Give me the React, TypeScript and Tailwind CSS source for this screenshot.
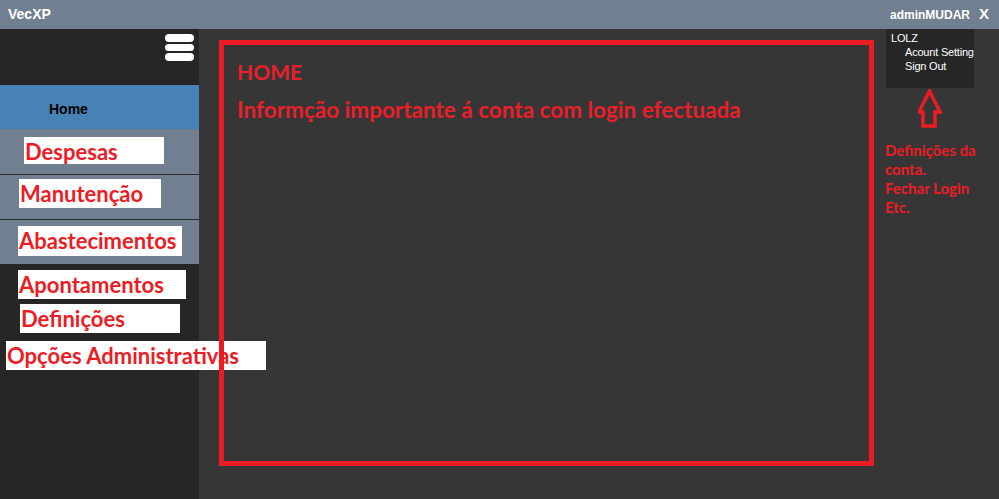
const navRows = [
  { label: 'Despesas', box: 'ml-[24px] mt-[8px] w-[140px] h-[27px]', row: 'h-[46px] border-b border-[#2a2a2a]' },
  { label: 'Manutenção', box: 'ml-[19px] mt-[4px] w-[142px] h-[29px]', row: 'h-[45px] border-b border-[#2a2a2a]' },
  { label: 'Abastecimentos', box: 'ml-[18px] mt-[6px] w-[164px] h-[30px]', row: 'h-[44px]' },
];

const extraItems = [
  { label: 'Apontamentos', box: 'ml-[18px] mt-[6px] w-[168px] h-[29px]' },
  { label: 'Definições', box: 'ml-[20px] mt-[5px] w-[160px] h-[29px]' },
  { label: 'Opções Administrativas', box: 'ml-[6px] mt-[8px] w-[260px] h-[29px]' },
];

function Tag({ label, box }: { label: string; box: string }) {
  return (
    <div className={`${box} bg-white pl-[1px] pt-[4px] text-[22px] leading-none font-bold text-[#ed1c24] whitespace-nowrap font-['Lato',sans-serif]`}>
      {label}
    </div>
  );
}

function UpArrow() {
  return (
    <svg width="25" height="40" viewBox="0 0 25 40" className="ml-[32px] mt-[1px]">
      <path
        d="M11.5 2 L22 23 L17 23 L17 37 L5 37 L5 23 L1 23 Z"
        fill="none"
        stroke="#ed1c24"
        strokeWidth={3.5}
        strokeLinejoin="miter"
      />
    </svg>
  );
}

export default function App() {
  return (
    <div className="w-[999px] h-[499px] bg-[#363636] flex flex-col overflow-hidden font-['Liberation_Sans',Arial,sans-serif]">
      <div className="h-[29px] bg-[#708090] flex items-center justify-between text-white">
        <span className="pl-[8px] text-[14px] font-bold">VecXP</span>
        <div className="flex items-center pr-[10px]">
          <span className="text-[12px] font-bold">adminMUDAR</span>
          <span className="ml-[9px] text-[15px] font-bold">X</span>
        </div>
      </div>

      <div className="flex-1 flex">
        <aside className="w-[199px] bg-[#262626] flex flex-col">
          <div className="h-[56px] flex justify-end pr-[5px] pt-[5px]">
            <div className="flex flex-col gap-[2px]">
              <span className="w-[29px] h-[8px] rounded-full bg-white" />
              <span className="w-[29px] h-[7px] rounded-full bg-white" />
              <span className="w-[29px] h-[8px] rounded-full bg-white" />
            </div>
          </div>
          <div className="h-[44px] bg-[#4682b4] flex items-center pl-[49px] pt-[4px] text-[14px] font-bold text-black">
            Home
          </div>
          {navRows.map(item => (
            <div key={item.label} className={`${item.row} bg-[#708090]`}>
              <Tag label={item.label} box={item.box} />
            </div>
          ))}
          {extraItems.map(item => (
            <Tag key={item.label} label={item.label} box={item.box} />
          ))}
        </aside>

        <main className="flex-1 flex">
          <div className="relative z-10 ml-[20px] mt-[11px] w-[655px] h-[426px] border-[5px] border-[#ed1c24] pl-[13px] pt-[16px] font-['Lato',sans-serif] font-bold text-[#e8202a]">
            <div className="text-[21px] leading-none">HOME</div>
            <div className="mt-[17px] text-[22.5px] leading-none whitespace-nowrap">
              Informção importante á conta com login efectuada
            </div>
          </div>

          <div className="ml-[12px] flex flex-col">
            <div className="w-[88px] h-[59px] bg-[#262626] pl-[5px] pt-[2px] text-[11px] leading-[14px] text-white whitespace-nowrap tracking-[-0.2px]">
              <div>LOLZ</div>
              <div className="pl-[14px]">Acount Setting</div>
              <div className="pl-[14px]">Sign Out</div>
            </div>
            <UpArrow />
            <p className="mt-[12px] -ml-[1px] text-[15px] leading-[19px] font-bold text-[#ed1c24] font-['Lato',sans-serif]">
              Definições da
              <br />
              conta.
              <br />
              Fechar Login
              <br />
              Etc.
            </p>
          </div>
        </main>
      </div>
    </div>
  );
}
